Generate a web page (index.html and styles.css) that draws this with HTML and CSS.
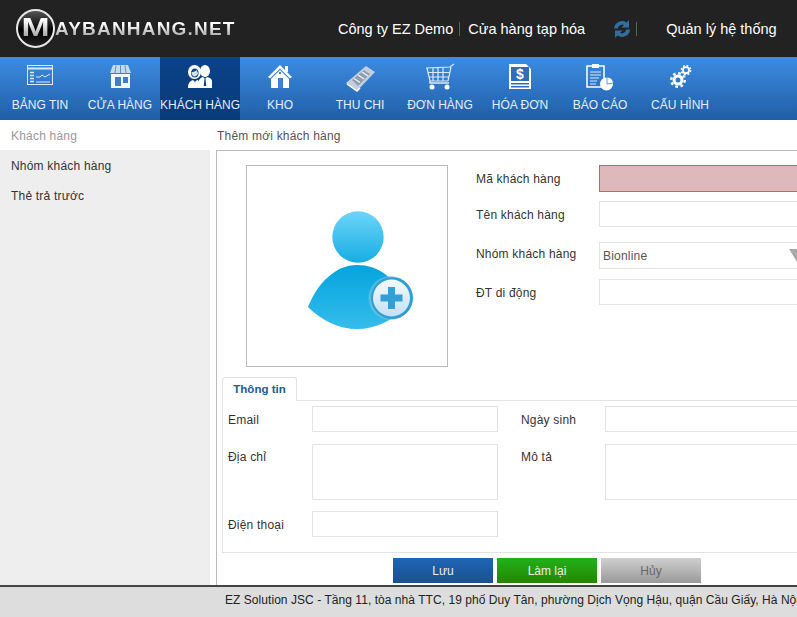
FILE: index.html
```html
<!DOCTYPE html>
<html lang="en">
<head>
    <meta charset="UTF-8">
    <title>Thêm mới khách hàng</title>
    <link rel="stylesheet" href="styles.css">
</head>
<body>
<div id="header">
    <div id="logo">
        <span class="logo-mark"><b>M</b></span>
        <span class="logo-text">AYBANHANG.NET</span>
    </div>
    <div id="top-links">
        <span>Công ty EZ Demo</span>
        <i class="sep"></i>
        <span>Cửa hàng tạp hóa</span>
        <svg class="sync" width="18" height="20" viewBox="0 0 18 20">
            <path d="M1 9.500 A8 8 0 0 1 13.500 3.500 L16 1 V8.500 H8.500 L11 6 A4.500 4.500 0 0 0 4.800 9.500 Z" fill="#2f6f9f"/>
            <path d="M17 10.500 A8 8 0 0 1 4.500 16.500 L2 19 V11.500 H9.500 L7 14 A4.500 4.500 0 0 0 13.200 10.500 Z" fill="#2f6f9f"/>
        </svg>
        <i class="sep sep-last"></i>
        <span class="system">Quản lý hệ thống</span>
    </div>
</div>
<ul id="nav">
    <li>
        <svg viewBox="0 0 32 30" fill="none" stroke="#dce9f8">
            <rect x="3.500" y="2.500" width="25" height="19" stroke-width="1"/>
            <path d="M4 5.500H28" stroke-width="2"/>
            <path d="M6 9.500h4M6 12.500h4M6 15.500h4M6 18.500h4" stroke-width="1.400"/>
            <path d="M12 14h4l2 -2 3 2 5 -3M12 19H26" stroke-width="1"/>
        </svg>
        <span>BẢNG TIN</span>
    </li>
    <li>
        <svg viewBox="0 0 32 30">
            <path d="M9 2H24L27 10H6Z" fill="#c9d9ec"/>
            <path d="M12 2.500L11 10M16.500 2.500V10M21 2.500L22 10" stroke="#5b8fc8" stroke-width="1"/>
            <path d="M7 11H26V25H7Z" fill="#f2f7fc"/>
            <rect x="11" y="14" width="6" height="9" fill="#3f7fc9"/>
            <rect x="19" y="14" width="5" height="6" fill="#3f7fc9"/>
        </svg>
        <span>CỬA HÀNG</span>
    </li>
    <li class="active">
        <svg viewBox="0 0 32 30" fill="#fff">
            <ellipse cx="10.500" cy="9" rx="6.500" ry="7"/>
            <ellipse cx="10.800" cy="10" rx="3.800" ry="4.500" fill="#0b4389"/>
            <path d="M7.500 9c2 0 4-.5 5-2l1.500 3c-.5 2-2 3.500-3.500 3.500s-3-2-3-4.500Z" fill="#d5e2f2"/>
            <path d="M4 25c0-5 2-7 5-8l2 2 2-2c2 .5 3 1.500 3 3v5Z"/>
            <ellipse cx="21" cy="8" rx="5" ry="6"/>
            <path d="M15 25V18c0-2 2-3.500 4-4l2 2 2-2c2 .5 5 1.500 5 4v7Z"/>
            <path d="M20.500 16h1l.8 7h-2.600Z" fill="#0b3f80"/>
        </svg>
        <span>KHÁCH HÀNG</span>
    </li>
    <li>
        <svg viewBox="0 0 32 30" fill="#fff">
            <path d="M16 2L28 14 26 15.500 16 5.500 6 15.500 4 14Z"/>
            <rect x="21" y="3" width="3" height="6"/>
            <path d="M16 7L25 16V25H7V16Z"/>
            <rect x="14" y="15" width="5" height="10" fill="#3f7fc9"/>
            <rect x="15" y="9" width="2" height="2" fill="#3f7fc9"/>
        </svg>
        <span>KHO</span>
    </li>
    <li>
        <svg viewBox="0 0 32 30">
            <path d="M2 20L22 3 31 9 13 28Z" fill="#c3cfdc"/>
            <path d="M8 17L20 7l6 4-12 12Z" fill="#8f9fb1"/>
            <path d="M14 12l6 4M10 15.500l6 4M18 9l6 4" stroke="#e9eff5" stroke-width="1.500"/>
            <path d="M3 21l10 7 3-3" fill="none" stroke="#fff" stroke-width="1.500"/>
        </svg>
        <span>THU CHI</span>
    </li>
    <li>
        <svg viewBox="0 0 32 30" fill="none" stroke="#dce9f8">
            <path d="M2 5L26 4 30 1M3 5L6 18H24L27 4M4.500 9.500H26M5.500 14H25M9 5V18M14 5V18M19 5V18" stroke-width="1.200"/>
            <path d="M6 18v2H25" stroke-width="1.500"/>
            <circle cx="8" cy="24" r="2.500" fill="#fff" stroke="none"/>
            <circle cx="23" cy="24" r="2.500" fill="#fff" stroke="none"/>
        </svg>
        <span>ĐƠN HÀNG</span>
    </li>
    <li>
        <svg viewBox="0 0 32 30">
            <path d="M5 1H22L27 6V26H5Z" fill="#fff"/>
            <rect x="7" y="4" width="18" height="14" fill="#2f6db8"/>
            <rect x="7" y="20" width="18" height="1.500" fill="#2f6db8"/>
            <rect x="7" y="23" width="18" height="1.500" fill="#2f6db8"/>
            <text x="16" y="16" class="dollar">$</text>
        </svg>
        <span>HÓA ĐƠN</span>
    </li>
    <li>
        <svg viewBox="0 0 32 30">
            <path d="M3 3H20V24H3Z" fill="none" stroke="#fff" stroke-width="1.500"/>
            <rect x="8" y="1" width="7" height="4" fill="#fff"/>
            <path d="M6 9h11M6 12h11M6 15h9M6 18h7M6 21h6" stroke="#dce9f8"/>
            <circle cx="22.500" cy="21" r="6.500" fill="#fff"/>
            <path d="M23 14a6.500 6.500 0 0 1 6.500 6L23 21Z" fill="#fff" stroke="#3a7cc8" stroke-width=".8"/>
        </svg>
        <span>BÁO CÁO</span>
    </li>
    <li>
        <svg viewBox="0 0 32 30" fill="none" stroke="#fff">
            <circle cx="14" cy="17" r="4" stroke-width="3"/>
            <circle cx="14" cy="17" r="6.800" stroke-width="2.400" stroke-dasharray="2.670 2.670"/>
            <circle cx="22" cy="7.200" r="3" stroke-width="1.800"/>
            <circle cx="22" cy="7.200" r="4.600" stroke-width="1.600" stroke-dasharray="1.800 1.810"/>
        </svg>
        <span>CẤU HÌNH</span>
    </li>
</ul>
<div id="content">
    <ul id="sidebar">
        <li class="current">Khách hàng</li>
        <li>Nhóm khách hàng</li>
        <li>Thẻ trả trước</li>
    </ul>
    <div id="main">
        <div class="page-title">Thêm mới khách hàng</div>
        <div class="panel">
            <div class="top-form">
                <div class="photo">
                    <svg width="200" height="200" viewBox="0 0 200 200">
                        <defs>
                            <linearGradient id="head" x1="0" y1="0" x2="0" y2="1">
                                <stop offset="0" stop-color="#6dd5f9"/>
                                <stop offset="1" stop-color="#17ade3"/>
                            </linearGradient>
                            <linearGradient id="body" x1="0" y1="0" x2="0" y2="1">
                                <stop offset="0" stop-color="#04a4dd"/>
                                <stop offset="1" stop-color="#34bdec"/>
                            </linearGradient>
                            <linearGradient id="plus" x1="0" y1="0" x2="0" y2="1">
                                <stop offset="0" stop-color="#f5fafd"/>
                                <stop offset="1" stop-color="#c4e0f2"/>
                            </linearGradient>
                        </defs>
                        <circle cx="111" cy="71" r="25.700" fill="url(#head)"/>
                        <path d="M61 141C70 118 88 99 110 99C132 99 150 112 160 141C145 155 128 163 110 163C92 163 75 155 61 141Z" fill="url(#body)"/>
                        <circle cx="143.500" cy="132" r="22" fill="#7fc4e3" opacity=".6"/>
                        <circle cx="145" cy="132" r="21" fill="#2f9fd3"/>
                        <circle cx="144.500" cy="132" r="18.500" fill="url(#plus)"/>
                        <path d="M141 121h7v7.500h7.500v7h-7.500v7.500h-7v-7.500h-7.500v-7h7.500Z" fill="#349fd4"/>
                    </svg>
                </div>
                <div class="fields">
                    <div class="field">
                        <label>Mã khách hàng</label>
                        <input type="text" class="invalid">
                    </div>
                    <div class="field">
                        <label>Tên khách hàng</label>
                        <input type="text">
                    </div>
                    <div class="field field-select">
                        <label>Nhóm khách hàng</label>
                        <div class="select">Bionline<i class="arrow"></i></div>
                    </div>
                    <div class="field">
                        <label>ĐT di động</label>
                        <input type="text">
                    </div>
                </div>
            </div>
            <div class="tab"><span>Thông tin</span></div>
            <div class="tab-body">
                <label>Email</label>
                <input type="text">
                <label>Ngày sinh</label>
                <input type="text">
                <label class="label-area">Địa chỉ</label>
                <textarea></textarea>
                <label class="label-area">Mô tả</label>
                <textarea></textarea>
                <label>Điện thoại</label>
                <input type="text">
            </div>
            <div class="buttons">
                <button class="btn btn-save">Lưu</button>
                <button class="btn btn-reset">Làm lại</button>
                <button class="btn btn-cancel">Hủy</button>
            </div>
        </div>
    </div>
</div>
<div id="footer">EZ Solution JSC - Tầng 11, tòa nhà TTC, 19 phố Duy Tân, phường Dịch Vọng Hậu, quận Cầu Giấy, Hà Nội</div>
</body>
</html>
```

FILE: styles.css
```css
*{
    margin: 0;
    padding: 0;
    box-sizing: border-box;
}
li{
    list-style: none;
}
html,body{
    height: 617px;
    overflow: hidden;
}
body{
    font-family: "Liberation Sans", Arial, sans-serif;
    font-size: 12px;
    letter-spacing: .2px;
    color: #333;
    background: #fff;
    display: flex;
    flex-direction: column;
}
#header{
    height: 57px;
    background: #222;
    display: flex;
    align-items: center;
    flex-shrink: 0;
    color: #fff;
    letter-spacing: 0;
}
#logo{
    width: 338px;
    flex-shrink: 0;
    padding-left: 16px;
    display: flex;
    align-items: center;
}
.logo-mark{
    width: 39px;
    height: 39px;
    border: 2px solid #e8e8e8;
    border-radius: 50%;
    background: linear-gradient(#555, #000 55%, #222);
    text-align: center;
    flex-shrink: 0;
}
.logo-mark b{
    display: block;
    font: bold 25px/33px "Liberation Sans", sans-serif;
    transform: scaleX(1.35);
    background: linear-gradient(#fff 30%, #777);
    -webkit-background-clip: text;
    background-clip: text;
    color: transparent;
}
.logo-text{
    font-weight: bold;
    font-size: 19px;
    letter-spacing: 1.2px;
    background: linear-gradient(#fff 30%, #888);
    -webkit-background-clip: text;
    background-clip: text;
    color: transparent;
}
#top-links{
    display: flex;
    align-items: center;
    font-size: 14.5px;
    white-space: nowrap;
    flex-shrink: 0;
}
#top-links .sep{
    width: 1px;
    height: 14px;
    background: #4b6b4b;
    margin: 0 8px 0 6px;
}
#top-links .sync{
    margin: 0 5px 0 28px;
}
#top-links .sep-last{
    margin: 0 29px 0 0;
}
#nav{
    height: 63px;
    display: flex;
    flex-shrink: 0;
    background: linear-gradient(#3c8ce3, #205ea5);
}
#nav li{
    width: 80px;
    padding-top: 6px;
    text-align: center;
    color: #e6eef8;
    font-size: 12px;
    letter-spacing: 0;
    white-space: nowrap;
}
#nav li.active{
    background: linear-gradient(#0b4389, #073a78);
}
#nav svg{
    display: block;
    width: 32px;
    height: 30px;
    margin: 0 auto 4px;
}
#nav span{
    display: block;
    line-height: 16px;
}
.dollar{
    font: bold 14px "Liberation Sans", sans-serif;
    fill: #fff;
    text-anchor: middle;
}
#content{
    flex: 1;
    display: flex;
    min-height: 0;
}
#sidebar{
    width: 210px;
    background: #eee;
    flex-shrink: 0;
}
#sidebar li{
    height: 30px;
    line-height: 32px;
    padding-left: 11px;
    color: #333;
}
#sidebar li.current{
    background: #fff;
    color: #999;
}
#main{
    margin-left: 6px;
    width: 900px;
    flex-shrink: 0;
}
.page-title{
    height: 30px;
    line-height: 32px;
    padding-left: 1px;
    color: #555;
}
.panel{
    height: 435px;
    border: 1px solid #bbb;
    border-right: 0;
    border-bottom: 0;
    padding: 14px 0 0 5px;
}
.top-form{
    display: flex;
    height: 212px;
}
.photo{
    width: 202px;
    height: 202px;
    margin-left: 24px;
    border: 1px solid #bbb;
}
.photo svg{
    display: block;
}
.fields{
    margin-left: 28px;
}
.field{
    display: flex;
    align-items: center;
    height: 26px;
    margin-bottom: 10px;
}
.field label{
    width: 123px;
    padding-top: 2px;
}
.field input{
    width: 400px;
    height: 26px;
}
input,textarea{
    border: 1px solid #e3e3e3;
    background: #fff;
    display: block;
    outline: 0;
    resize: none;
}
.field input.invalid{
    height: 27px;
    background: #deb9bb;
    border-color: #e8555a;
}
.field-select{
    margin-top: 15px;
    height: 27px;
}
.field-select label{
    padding: 0 0 4px;
}
.select{
    width: 400px;
    height: 27px;
    line-height: 27px;
    border: 1px solid #e3e3e3;
    padding-left: 3px;
    color: #555;
    position: relative;
}
.arrow{
    position: absolute;
    left: 189px;
    top: 6px;
    width: 0;
    height: 0;
    border-left: 8px solid transparent;
    border-right: 8px solid transparent;
    border-top: 13px solid #aaa;
}
.tab{
    display: flex;
    height: 24px;
    margin-bottom: -1px;
}
.tab span{
    width: 75px;
    height: 24px;
    line-height: 23px;
    border: 1px solid #e3e3e3;
    border-bottom: 0;
    border-radius: 3px 3px 0 0;
    background: #fff;
    text-align: center;
    font-weight: bold;
    font-size: 11.5px;
    letter-spacing: 0;
    color: #1a5c96;
    position: relative;
    z-index: 1;
}
.tab-body{
    height: 153px;
    border: 1px solid #e3e3e3;
    border-right: 0;
    padding: 5px 0 0 5px;
    display: grid;
    grid-template-columns: 84px 186px 23px 84px 400px;
    grid-template-rows: 38px 67px 26px;
}
.tab-body label{
    padding-top: 7px;
}
.tab-body .label-area{
    padding-top: 6px;
}
.tab-body label:nth-of-type(even){
    grid-column: 4;
}
.tab-body input{
    width: 100%;
    height: 26px;
}
.tab-body textarea{
    width: 100%;
    height: 56px;
}
.tab-body input:nth-of-type(even),
.tab-body textarea:nth-of-type(even){
    grid-column: 5;
}
.buttons{
    display: flex;
    gap: 4px;
    padding: 5px 0 0 171px;
}
.btn{
    width: 100px;
    height: 25px;
    border: 0;
    font: 12px "Liberation Sans", sans-serif;
    color: #eee;
}
.btn-save{
    background: linear-gradient(#1f66b5, #1b4f8f);
}
.btn-reset{
    background: linear-gradient(#22b21b, #268500);
}
.btn-cancel{
    background: linear-gradient(#d0d0d0, #999);
    color: #666;
}
#footer{
    height: 32px;
    flex-shrink: 0;
    background: #ddd;
    border-top: 2px solid #444;
    padding: 5px 0 0 225px;
    line-height: 16px;
    white-space: nowrap;
    letter-spacing: .05px;
    color: #222;
    position: relative;
    z-index: 1;
}
```
